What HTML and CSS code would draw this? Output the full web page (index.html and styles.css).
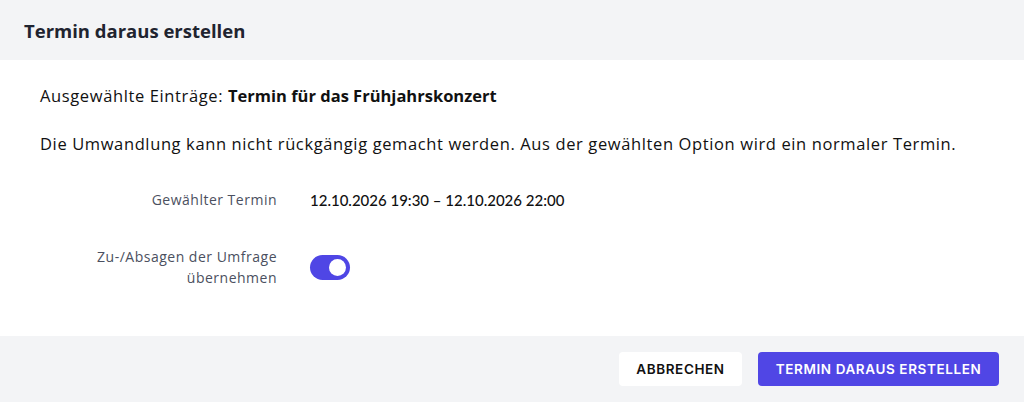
FILE: index.html
```html
<!DOCTYPE html>
<html lang="de">
<head>
<meta charset="utf-8">
<link rel="stylesheet" href="styles.css">
</head>
<body>
<div class="dialog">
  <header class="head">
    <h1 class="title">Termin daraus erstellen</h1>
  </header>
  <main class="body">
    <p class="line">Ausgewählte Einträge: <strong>Termin für das Frühjahrskonzert</strong></p>
    <p class="line">Die Umwandlung kann nicht rückgängig gemacht werden. Aus der gewählten Option wird ein normaler Termin.</p>
    <div class="form">
      <div class="label">Gewählter Termin</div>
      <div class="value">12.10.2026 19:30 – 12.10.2026 22:00</div>
      <div class="label">Zu-/Absagen der Umfrage übernehmen</div>
      <div class="value"><span class="toggle"><span class="knob"></span></span></div>
    </div>
  </main>
  <footer class="foot">
    <button class="btn btn-light">ABBRECHEN</button>
    <button class="btn btn-primary">TERMIN DARAUS ERSTELLEN</button>
  </footer>
</div>
</body>
</html>
```
FILE: styles.css
```css
* { box-sizing: border-box; }
html, body { margin: 0; padding: 0; background: #fff; }
body { font-family: "Open Sans", "Noto Sans", sans-serif; color: #111; }
.dialog { width: 1024px; height: 402px; display: flex; flex-direction: column; }
.head { background: #f3f4f6; height: 60px; display: flex; align-items: center; padding: 0 24px; }
.title { margin: 0; font-size: 18.5px; font-weight: 700; color: #1f2430; }
.body { flex: 1; padding: 25px 40px 0; }
.line { margin: 0 0 26px; font-size: 16.5px; line-height: 22px; color: #111; letter-spacing: 0.62px; }
.line strong { font-weight: 700; letter-spacing: 0; }
.form { display: grid; grid-template-columns: 237px 1fr; column-gap: 33px; row-gap: 36px; align-items: center; margin-top: 34px; }
.label { text-align: right; font-size: 14px; line-height: 21px; letter-spacing: 0.5px; color: #4b5060; justify-self: end; width: 210px; }
.value { font-family: "Lato", sans-serif; font-size: 15px; font-weight: 500; color: #111; }
.toggle { display: inline-block; width: 40px; height: 25px; border-radius: 13px; background: #4f46e5; position: relative; vertical-align: middle; }
.knob { position: absolute; top: 4px; right: 4px; width: 17px; height: 17px; border-radius: 50%; background: #fff; }
.foot { background: #f3f4f6; height: 66px; display: flex; justify-content: flex-end; align-items: center; gap: 16px; padding: 0 25px; }
.btn { font-family: "Inter", "Lato", sans-serif; font-size: 13.5px; font-weight: 600; letter-spacing: 0.6px; border: none; border-radius: 4px; height: 34px; padding: 0 16px; cursor: pointer; }
.btn-light { background: #fff; color: #111; width: 123px; }
.btn-primary { background: #5046e5; color: #fff; width: 241px; }
```
